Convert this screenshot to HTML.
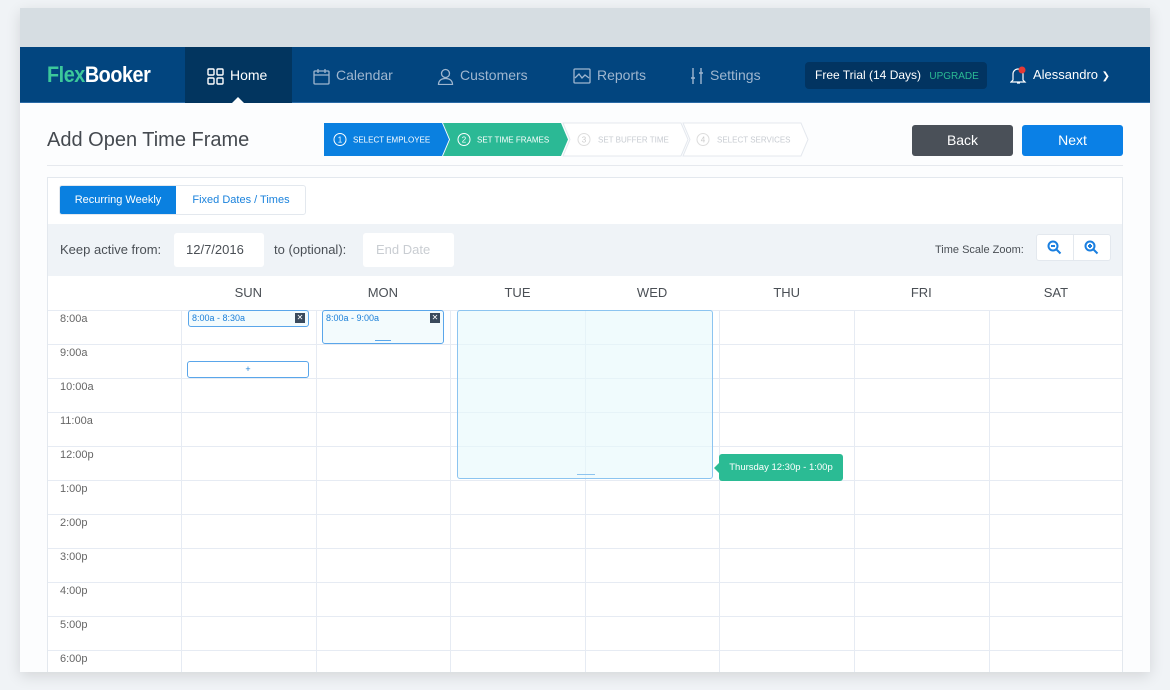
<!DOCTYPE html>
<html><head><meta charset="utf-8"><style>
*{box-sizing:border-box;margin:0;padding:0}
body{width:1170px;height:690px;background:#f0f3f6;font-family:"Liberation Sans",sans-serif;position:relative;overflow:hidden}
.abs{position:absolute}
.win{left:20px;top:8px;width:1130px;height:664px;background:#fcfdfe;box-shadow:0 4px 14px rgba(0,0,0,.12);overflow:hidden}
.top{left:0;top:0;width:1130px;height:39px;background:#d6dde2}
.nav{left:0;top:39px;width:1130px;height:56px;background:#02457f;border-bottom:1px solid #2a6aa6}
.nav .it{position:absolute;top:0;height:56px;line-height:56px;color:#9fb6cf;font-size:14px}
.nav svg{vertical-align:middle;margin-right:6px}
</style></head><body>
<div class="abs win">
 <div class="abs top"></div>
 <div class="abs nav">
  <div class="it" style="left:27px;color:#fff;font-weight:bold;font-size:22px;letter-spacing:-0.5px;transform:scaleX(.9);transform-origin:left"><span style="color:#3cc89b">Flex</span>Booker</div>
  <div class="abs" style="left:165px;top:0;width:107px;height:56px;background:#02355f"></div>
  <div class="abs" style="left:212px;top:50px;width:0;height:0;border-left:6px solid transparent;border-right:6px solid transparent;border-bottom:6px solid #fcfdfe"></div>
  <div class="it" style="left:187px;color:#fff"><svg width="17" height="17" viewBox="0 0 17 17" fill="none" stroke="#fff" stroke-width="1.4"><rect x="1" y="1" width="6" height="6" rx="1"/><rect x="10" y="1" width="6" height="6" rx="1"/><rect x="1" y="10" width="6" height="6" rx="1"/><rect x="10" y="10" width="6" height="6" rx="1"/></svg>Home</div>
  <div class="it" style="left:293px"><svg width="17" height="17" viewBox="0 0 17 17" fill="none" stroke="#9fb6cf" stroke-width="1.3"><rect x="1" y="3" width="15" height="13" rx="1"/><path d="M1 7h15M5 1v4M12 1v4"/></svg>Calendar</div>
  <div class="it" style="left:417px"><svg width="17" height="17" viewBox="0 0 17 17" fill="none" stroke="#9fb6cf" stroke-width="1.3"><circle cx="8.5" cy="5.5" r="4"/><path d="M1.5 16.5c0-4 3-6 7-6s7 2 7 6z"/></svg>Customers</div>
  <div class="it" style="left:553px"><svg width="18" height="16" viewBox="0 0 18 16" fill="none" stroke="#9fb6cf" stroke-width="1.3"><rect x="1" y="1" width="16" height="14" rx="1"/><path d="M2 10l4-4 3 4 3-3 4 3"/></svg>Reports</div>
  <div class="it" style="left:670px"><svg width="14" height="18" viewBox="0 0 14 18" fill="none" stroke="#9fb6cf" stroke-width="1.4"><path d="M3 1v16M11 1v16M1 11h4M9 6h4"/></svg>Settings</div>
  <div class="abs" style="left:785px;top:15px;width:182px;height:27px;background:#023461;border-radius:4px;color:#fff;font-size:12px;line-height:27px;padding-left:10px">Free Trial (14 Days) <span style="color:#2bbb94;font-size:10px;margin-left:5px">UPGRADE</span></div>
  <div class="it" style="left:990px;color:#fff;font-size:13px"><svg width="17" height="19" viewBox="0 0 17 19" fill="none" stroke="#fff" stroke-width="1.2"><path d="M3 14V8a5 5 0 0110 0v6l2 2H1z M7 17h3"/><circle cx="12" cy="4" r="3.5" fill="#e53935" stroke="none"/></svg>Alessandro <span style="font-size:10px">&#10095;</span></div>
 </div>
 <div class="abs" style="left:27px;top:121px;font-size:20px;color:#454a50">Add Open Time Frame</div>
 <svg class="abs" style="left:303px;top:114px" width="490" height="36">
  <path d="M1 1H119L126 17.5 119 34H1z" fill="#0a80e0"/>
  <path d="M120 1H238L245 17.5 238 34H120L127 17.5z" fill="#2bb995"/>
  <path d="M240 1H358L365 17.5 358 34H240L247 17.5z" fill="#fff" stroke="#e4e8ee"/>
  <path d="M360 1H478L485 17.5 478 34H360L367 17.5z" fill="#fff" stroke="#e4e8ee"/>
  <g fill="none" stroke-width="1"><circle cx="17" cy="17.5" r="6" stroke="#fff"/><circle cx="141" cy="17.5" r="6" stroke="#fff"/><circle cx="261" cy="17.5" r="6" stroke="#ddd"/><circle cx="380" cy="17.5" r="6" stroke="#ddd"/></g>
  <g font-size="8" font-family="Liberation Sans"><text x="17" y="20.5" fill="#fff" text-anchor="middle">1</text><text x="141" y="20.5" fill="#fff" text-anchor="middle">2</text><text x="261" y="20.5" fill="#ccc" text-anchor="middle">3</text><text x="380" y="20.5" fill="#ccc" text-anchor="middle">4</text>
  <text x="30" y="20.5" fill="#fff">SELECT EMPLOYEE</text><text x="154" y="20.5" fill="#fff">SET TIME FRAMES</text><text x="275" y="20.5" fill="#c8ccd2">SET BUFFER TIME</text><text x="394" y="20.5" fill="#c8ccd2">SELECT SERVICES</text></g>
 </svg>
 <div class="abs" style="left:892px;top:117px;width:101px;height:31px;background:#4a5058;border-radius:3px;color:#fff;font-size:14px;text-align:center;line-height:31px">Back</div>
 <div class="abs" style="left:1002px;top:117px;width:101px;height:31px;background:#0a80e6;border-radius:3px;color:#fff;font-size:14px;text-align:center;line-height:31px">Next</div>
 <div class="abs" style="left:27px;top:157px;width:1076px;height:1px;background:#e6e9ee"></div>
 <div class="abs" style="left:27px;top:169px;width:1076px;height:500px;background:#fff;border:1px solid #e3e8ee">
  <div class="abs" style="left:11px;top:7px;width:247px;height:30px;border:1px solid #e3e8ee;border-radius:3px;font-size:11px;line-height:28px">
   <div class="abs" style="left:0;top:0;width:116px;height:28px;background:#0a80e0;color:#fff;text-align:center;border-radius:2px 0 0 2px">Recurring Weekly</div>
   <div class="abs" style="left:116px;top:0;width:130px;text-align:center;color:#1a82dc">Fixed Dates / Times</div>
  </div>
  <div class="abs" style="left:0;top:46px;width:1074px;height:52px;background:#eff3f7;font-size:13px;color:#4a4f55">
   <div class="abs" style="left:12px;top:18px">Keep active from:</div>
   <div class="abs" style="left:126px;top:9px;width:90px;height:34px;background:#fff;border-radius:3px;line-height:34px;padding-left:12px">12/7/2016</div>
   <div class="abs" style="left:226px;top:18px">to (optional):</div>
   <div class="abs" style="left:315px;top:9px;width:91px;height:34px;background:#fff;border-radius:3px;line-height:34px;padding-left:13px;color:#c9cdd2">End Date</div>
   <div class="abs" style="left:887px;top:20px;font-size:11px">Time Scale Zoom:</div>
   <div class="abs" style="left:988px;top:10px;width:75px;height:27px;background:#fff;border-radius:3px;border:1px solid #e3e8ee"></div>
   <div class="abs" style="left:1025px;top:10px;width:1px;height:27px;background:#e3e8ee"></div>
   <svg class="abs" style="left:999px;top:16px" width="15" height="15" fill="none" stroke="#1a7fe0" stroke-width="2"><circle cx="6" cy="6" r="4.5"/><path d="M9.5 9.5l4 4M4 6h4"/></svg>
   <svg class="abs" style="left:1036px;top:16px" width="15" height="15" fill="none" stroke="#1a7fe0" stroke-width="2"><circle cx="6" cy="6" r="4.5"/><path d="M9.5 9.5l4 4M4 6h4M6 4v4"/></svg>
  </div>
  <div id="grid"></div>
 </div>
</div>
<script>
var g=document.getElementById('grid'),h='';
var days=['SUN','MON','TUE','WED','THU','FRI','SAT'],times=['8:00a','9:00a','10:00a','11:00a','12:00p','1:00p','2:00p','3:00p','4:00p','5:00p','6:00p'];
for(var d=0;d<7;d++){var x=133+d*134.6;h+='<div class="abs" style="left:'+x+'px;top:107px;width:134.6px;text-align:center;font-size:13px;color:#4a4f55">'+days[d]+'</div>';}
for(var r=0;r<11;r++){var y=132+r*34;h+='<div class="abs" style="left:12px;top:'+(y+3)+'px;font-size:11px;color:#666">'+times[r]+'</div>';
h+='<div class="abs" style="left:0;top:'+y+'px;width:1074px;height:1px;background:#e6ebf3"></div>';}
for(var d=0;d<7;d++){var x=133+d*134.6;h+='<div class="abs" style="left:'+x+'px;top:132px;width:1px;height:370px;background:#e6ebf3"></div>';}
g.innerHTML=h;
</script>
<div class="abs" style="left:188px;top:310px;width:121px;height:17px;border:1.5px solid #5aa6ea;border-radius:3px;background:#f3fbfd;font-size:9px;color:#1a7fd8;padding:2px 0 0 3px">8:00a - 8:30a<span class="abs" style="right:3px;top:2px;width:10px;height:10px;background:#3a4a5c;color:#fff;font-size:8px;line-height:10px;text-align:center">&#10005;</span></div>
<div class="abs" style="left:322px;top:310px;width:122px;height:34px;border:1.5px solid #5aa6ea;border-radius:3px;background:#f3fbfd;font-size:9px;color:#1a7fd8;padding:2px 0 0 3px">8:00a - 9:00a<span class="abs" style="right:3px;top:2px;width:10px;height:10px;background:#3a4a5c;color:#fff;font-size:8px;line-height:10px;text-align:center">&#10005;</span><span class="abs" style="left:52px;bottom:2px;width:16px;height:1px;background:#5aa6ea"></span></div>
<div class="abs" style="left:187px;top:361px;width:122px;height:17px;border:1.5px solid #5aa6ea;border-radius:3px;background:#fff;font-size:9px;color:#1a7fd8;text-align:center;line-height:14px">+</div>
<div class="abs" style="left:457px;top:310px;width:256px;height:169px;border:1px solid #8cc4f0;border-radius:3px;background:rgba(230,248,252,.6)"><span class="abs" style="left:119px;bottom:3px;width:18px;height:1px;background:#8cc4f0"></span></div>
<div class="abs" style="left:719px;top:454px;width:124px;height:27px;background:#2bbb94;border-radius:3px;color:#fff;font-size:9.5px;line-height:27px;text-align:center">Thursday 12:30p - 1:00p</div>
<div class="abs" style="left:714px;top:463px;width:0;height:0;border-top:5px solid transparent;border-bottom:5px solid transparent;border-right:5px solid #2bbb94"></div>
</body></html>
